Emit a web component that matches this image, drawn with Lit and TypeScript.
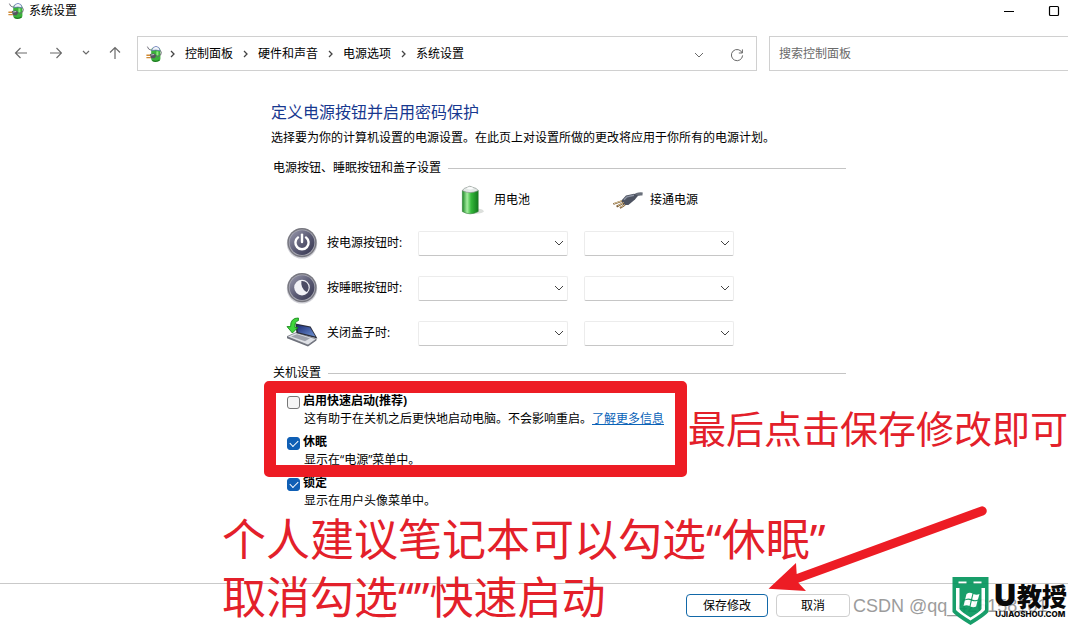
import { LitElement, html, css, svg } from "lit";
import { customElement, state } from "lit/decorators.js";

const plugIcon = (size: number) => html`
  <svg width=${size} height=${size} viewBox="0 0 16 16" aria-hidden="true">
    <rect x="5.2" y="1.6" width="9.2" height="14" rx="3" fill="#3bb23b" />
    <path d="M5.600 4.600Q6.600 .6 10 .3Q13.600 .6 14.200 4.800Q10 3.400 5.600 4.600Z" fill="#f0f4f8" stroke="#5a6db0" stroke-width=".7" />
    <path d="M11.400 5.400v4" stroke="#8fe880" stroke-width="2" />
    <path d="M6.400 14.4Q10 16.4 13.400 14" stroke="#1d7a20" stroke-width="1.2" fill="none" />
    <path d="M1.4 .6Q2 3.600 5.200 4.200M14.200 4.400Q16.400 6 14.600 9L11 11" fill="none" stroke="#6a6672" stroke-width=".9" />
    <path d="M3.800 8L8.200 7.400L10.600 9.400L8.600 12.200L4.800 12.200Z" fill="#55555f" />
    <path d="M5.200 9l3-.5" stroke="#c0c3ce" />
    <path d="M.4 9.200h3.800M.4 11.600h4.400" stroke="#d08a34" stroke-width="1.400" />
  </svg>`;

const chevron = (cls: string) => html`
  <svg class=${cls} width="10" height="6" viewBox="0 0 10 6" aria-hidden="true">
    <path d="M1 1l4 4l4-4" fill="none" stroke="currentColor" />
  </svg>`;

const crumbArrow = html`
  <svg class="crumb-arrow" width="5" height="8" viewBox="0 0 5 8" aria-hidden="true">
    <path d="M1 1l3 3l-3 3" fill="none" stroke="currentColor" stroke-width="1.3" />
  </svg>`;

const roundFace = (id: string, glyph: unknown) => html`
  <svg width="32" height="32" viewBox="0 0 32 32" aria-hidden="true">
    <defs>
      <linearGradient id=${id} x1="0" y1="0" x2="1" y2="1">
        <stop offset="0" stop-color="#9a9aae" />
        <stop offset=".5" stop-color="#5d5d76" />
        <stop offset="1" stop-color="#35354f" />
      </linearGradient>
    </defs>
    <circle cx="16" cy="16.4" r="15.2" fill="#cfcfd6" />
    <circle cx="16" cy="15.600" r="14.6" fill="#77777f" />
    <circle cx="16" cy="15.600" r="13.2" fill="#a9a9b4" />
    <circle cx="16" cy="15.600" r="12.4" fill="url(#${id})" />
    ${glyph}
  </svg>`;

const powerFace = roundFace("power-face", svg`
  <path d="M12 10.4a6.6 6.6 0 1 0 8 0" fill="none" stroke="#fff" stroke-width="2.4" stroke-linecap="round"/>
  <path d="M16 7.600v7.4" stroke="#fff" stroke-width="2.4" stroke-linecap="round"/>`);

const sleepFace = roundFace("sleep-face", svg`
  <circle cx="16" cy="15.600" r="7.8" fill="#f1f1f6"/>
  <path d="M15.4 9Q22 8.600 22.600 15.600Q22.400 19.400 20.400 20Q14.400 16.200 15.400 9Z" fill="#4b4b64"/>`);

const lidFace = html`
  <svg width="32" height="32" viewBox="0 0 32 32" aria-hidden="true">
    <defs>
      <linearGradient id="lid" x1="0" y1="0" x2="1" y2="1">
        <stop offset="0" stop-color="#1c2c75" />
        <stop offset="1" stop-color="#6f93d4" />
      </linearGradient>
    </defs>
    <path d="M1 19.600L10 15.6L30.4 22L22 28Z" fill="#dfe1e6" stroke="#7b7e88" stroke-width=".8" />
    <path d="M1 19.600v1.6L22 29.6L30.4 23.600V22L22 28Z" fill="#6d707a" />
    <path d="M5 19.600l6-2.400l13 4l-5 3Z" fill="#9fa2ac" />
    <path d="M10.4 16L9.4 6.600L24.600 9.4L31.4 21.4Z" fill="#2a2d3b" />
    <path d="M12 15.2L11 8L24 10.4L29.4 19.600Z" fill="url(#lid)" />
    <path d="M12.400 1Q4.400 .8 4.600 9.600H1L6.400 16L12 10.400H8.8Q8.600 4.400 12.400 3.600Z" fill="#3fd63a" stroke="#178a1b" stroke-width=".9" />
  </svg>`;

const batteryIcon = html`
  <svg width="24" height="30" viewBox="0 0 24 30" aria-hidden="true">
    <defs>
      <linearGradient id="cell" x1="0" y1="0" x2="1" y2="0">
        <stop offset="0" stop-color="#1d8a27" />
        <stop offset=".3" stop-color="#a5eda0" />
        <stop offset=".55" stop-color="#35b93b" />
        <stop offset="1" stop-color="#117a1c" />
      </linearGradient>
    </defs>
    <ellipse cx="16" cy="26.2" rx="7.600" ry="2.6" fill="#dcdfdc" />
    <path d="M2.4 5.4V26.600Q10 31 18.2 26.600V5.4Z" fill="url(#cell)" stroke="#2a7a2f" stroke-width=".6" />
    <path d="M2.400 5.600Q4 2.600 7 2.400Q9.600 0 13 2.400Q17 3 18.200 5.600Q10 9.600 2.400 5.600Z" fill="#e4e9e7" stroke="#8e9892" stroke-width=".7" />
    <path d="M6.400 3.200Q10 1 13.800 3.200Q10 5.600 6.400 3.200Z" fill="#fbfcfc" />
  </svg>`;

const cordIcon = html`
  <svg width="32" height="18" viewBox="0 0 32 18" aria-hidden="true">
    <path d="M23 5.600Q26 2.4 31.600 3" fill="none" stroke="#6a707b" stroke-width="3.200" />
    <path d="M10 10L15 4.400L23 2.800L27 4.8L24 8.6L17.400 14L12.400 14Z" fill="#4d5361" />
    <path d="M13 8.8L16 5.800L23 4.200" fill="none" stroke="#8f96a5" stroke-width="1.4" />
    <path d="M11 10L2.4 13M12.600 11.8L5.600 15.600M14 13.8L9 17" stroke="#6b4a22" stroke-width="1.800" />
    <path d="M11 9.8L3 12.6M12.600 11.6L6.600 14.8M14 13.6L9.600 16.4" stroke="#f0dcb0" stroke-width=".9" />
  </svg>`;

interface ShutdownOption {
  id: string;
  title: string;
  note: string;
  link?: string;
  on: boolean;
}

@customElement("app-root")
export class AppRoot extends LitElement {
  @state() private options: ShutdownOption[] = [
    { id: "fast", title: "启用快速启动(推荐)", note: "这有助于在关机之后更快地启动电脑。不会影响重启。", link: "了解更多信息", on: false },
    { id: "hibernate", title: "休眠", note: "显示在“电源”菜单中。", on: true },
    { id: "lock", title: "锁定", note: "显示在用户头像菜单中。", on: true },
  ];

  private crumbs = ["控制面板", "硬件和声音", "电源选项", "系统设置"];

  private actions = [
    { id: "power", label: "按电源按钮时:", icon: powerFace },
    { id: "sleep", label: "按睡眠按钮时:", icon: sleepFace },
    { id: "lid", label: "关闭盖子时:", icon: lidFace },
  ];

  static styles = css`
    :host {
      display: block;
      position: relative;
      overflow: hidden;
      min-height: 100vh;
      background: #fff;
      color: #000;
      font: 12px/18px "Open Sans", "Noto Sans CJK SC", sans-serif;
    }
    * { box-sizing: border-box; }
    svg { display: block; flex: none; }
    button, input, select { font: inherit; color: inherit; margin: 0; }
    .window { display: flex; flex-direction: column; min-height: 100vh; }

    .titlebar { display: flex; align-items: center; height: 21px; padding: 0 8px; gap: 5px; }
    .titlebar h1 { margin: 0; flex: 1; font-size: 12px; font-weight: 400; }
    .controls { display: flex; gap: 33px; }
    .icon-button { display: grid; place-items: center; padding: 0; border: 0; background: none; color: #6a6a6a; }
    .controls .icon-button { color: #000; }

    .nav { display: flex; align-items: stretch; height: 35px; margin-top: 15px; }
    .history { display: flex; align-items: center; gap: 20px; padding: 0 15px 2px 14px; }
    .history .pair { display: flex; align-items: center; gap: 18px; }
    .address { flex: 1; display: flex; align-items: center; border: 1px solid #d0d0d0; padding: 0 12px 0 8px; }
    .crumbs { display: flex; align-items: center; gap: 10px; flex: 1; margin: 0; padding: 0 0 0 8px; list-style: none; }
    .crumbs li { display: flex; align-items: center; gap: 10px; }
    .crumbs a { color: #000; text-decoration: none; }
    .crumb-arrow { color: #444; }
    .address-tools { display: flex; align-items: center; gap: 26px; padding-top: 3px; }
    .search { width: 28%; margin-left: 12px; border: 1px solid #d0d0d0; border-right: 0; display: flex; }
    .search input { flex: 1; min-width: 0; border: 0; outline: 0; padding: 0 9px; background: none; }
    .search input::placeholder { color: #6a6a6a; opacity: 1; }

    .content { flex: 1; width: 100%; max-width: 846px; padding: 29px 0 0 271px; }
    .content h2 { margin: 0; font-size: 16px; line-height: 24px; font-weight: 400; color: #17388f; }
    .intro { margin: 5px 0 0; }
    .section { display: flex; align-items: center; gap: 7px; margin: 0; padding-left: 2px; font-size: 12px; font-weight: 400; white-space: nowrap; }
    .section::after { content: ""; flex: 1; height: 1px; background: #c4c4c4; }
    .power { margin-top: 12px; }

    .grid { display: grid; grid-template-columns: 33px 83px 150px 150px; column-gap: 8px; row-gap: 13px; align-items: center; padding: 7px 0 0 15px; }
    .source { display: flex; align-items: center; height: 32px; white-space: nowrap; margin-bottom: -2px; }
    .battery { grid-column: 3; padding-left: 42px; gap: 10px; }
    .cord { grid-column: 4; padding-left: 35px; gap: 7px; }
    .grid label { white-space: nowrap; }
    .grid .field { display: grid; align-items: center; width: 150px; }
    .grid .second { margin-left: 8px; }
    .grid select { grid-area: 1 / 1; height: 25px; width: 100%; appearance: none; border: 1px solid #ececec; border-bottom-color: #c6c6c6; border-radius: 2px; background: #fff; }
    .field .chev { grid-area: 1 / 1; justify-self: end; margin-right: 4px; pointer-events: none; color: #444; }

    .shutdown { margin-top: 15px; }
    .options { display: flex; flex-direction: column; gap: 5px; padding: 10px 0 0 16px; }
    .option { display: grid; grid-template-columns: 13px 1fr; column-gap: 3px; }
    .option input { appearance: none; width: 13px; height: 13px; margin-top: 4px; border: 1px solid #777; border-radius: 3px; background: #f5f5f5; display: grid; place-items: center; }
    .option input:checked { background: #0f5fb5; border-color: #0f5fb5; }
    .option input:checked::before { content: ""; width: 7px; height: 4px; margin-bottom: 2px; border: solid #fff; border-width: 0 0 1px 1px; transform: rotate(-45deg); }
    .option label { font-weight: 700; }
    .option p { grid-column: 2; margin: 0; padding-left: 1px; }
    .option a { color: #0a63b8; }

    .footer { display: flex; justify-content: flex-end; gap: 8px; height: 43px; padding: 10px 218px 0 0; border-top: 1px solid #c9c9c9; }
    .footer button { height: 23px; width: 74px; padding: 0; border: 1px solid #cfcfcf; border-radius: 4px; background: #fff; line-height: 16px; }
    .footer .primary { width: 82px; border-color: #1268a8; }

    /* marks drawn over the window */
    .frame { position: absolute; left: 264px; top: 381px; width: 423px; height: 96px; border: 12px solid #ed1c24; border-radius: 5px; pointer-events: none; }
    .note { position: absolute; margin: 0; color: #e3202a; font-family: "Noto Sans", "Noto Sans CJK SC", sans-serif; white-space: nowrap; pointer-events: none; }
    .note-side { left: 688px; top: 399px; font-size: 38px; line-height: 58px; }
    .note-main { left: 222px; top: 510px; font-size: 44px; line-height: 58px; }
    .arrow { position: absolute; left: 760px; top: 500px; pointer-events: none; }
    .watermark { position: absolute; left: 853px; top: 595px; font: 18px/22px "Liberation Sans", sans-serif; color: #9c9c9c; white-space: nowrap; pointer-events: none; }
    .brand { position: absolute; right: 1px; top: 577px; display: flex; gap: 5px; color: #0a0a0a; pointer-events: none; }
    .shield { opacity: 0.9; }
    .brand-name { display: grid; grid-template-columns: auto auto; justify-content: start; align-content: start; column-gap: 1px; padding-top: 5px; }
    .brand-u { font: 900 30px/26px Inter, sans-serif; }
    .brand-cn { font: 900 25px/26px "Noto Sans CJK SC", sans-serif; }
    .brand-url { grid-column: 1 / 3; padding-left: 1px; font: 800 8px/12px Inter, sans-serif; }
  `;

  private toggle(id: string, e: Event) {
    const on = (e.target as HTMLInputElement).checked;
    this.options = this.options.map((o) => (o.id === id ? { ...o, on } : o));
  }

  private picker(id: string, label: string, second = false) {
    return html`
      <div class="field ${second ? "second" : ""}">
        <select id=${id} aria-label=${label}></select>
        ${chevron("chev")}
      </div>`;
  }

  private arrowButton(label: string, d: string) {
    return html`
      <button class="icon-button" aria-label=${label}>
        <svg width="14" height="14" viewBox="0 0 14 14"><path d=${d} fill="none" stroke="currentColor" stroke-width="1.2" /></svg>
      </button>`;
  }

  render() {
    return html`
      <div class="window">
        <header class="titlebar">
          ${plugIcon(16)}
          <h1>系统设置</h1>
          <div class="controls">
            <button class="icon-button" aria-label="最小化">
              <svg width="12" height="12" viewBox="0 0 12 12"><path d="M1 6.5h10" stroke="currentColor" /></svg>
            </button>
            <button class="icon-button" aria-label="最大化">
              <svg width="12" height="12" viewBox="0 0 12 12"><rect x="1.5" y="1.5" width="9" height="9" rx="1" fill="none" stroke="currentColor" stroke-width="1.2" /></svg>
            </button>
          </div>
        </header>

        <nav class="nav">
          <div class="history">
            ${this.arrowButton("后退", "M13 7H1.5M6.5 2L1.5 7L6.5 12")}
            ${this.arrowButton("前进", "M2 7h11.5M8.5 2L13.5 7L8.5 12")}
            <div class="pair">
              <button class="icon-button" aria-label="最近位置">
                <svg width="8" height="6" viewBox="0 0 8 6"><path d="M1 1l3 3l3-3" fill="none" stroke="currentColor" stroke-width="1.2" /></svg>
              </button>
              ${this.arrowButton("向上", "M7 13V1.5M2 6.5L7 1.5L12 6.5")}
            </div>
          </div>
          <div class="address">
            ${plugIcon(16)}
            <ol class="crumbs">
              ${this.crumbs.map((c) => html`<li>${crumbArrow}<a href="#">${c}</a></li>`)}
            </ol>
            <div class="address-tools">
              <button class="icon-button" aria-label="历史记录">${chevron("")}</button>
              <button class="icon-button" aria-label="刷新">
                <svg width="14" height="14" viewBox="0 0 14 14">
                  <path d="M12.2 5A5.6 5.6 0 1 0 12.6 7.4M12.4 1.4V5H8.8" fill="none" stroke="currentColor" />
                </svg>
              </button>
            </div>
          </div>
          <div class="search"><input type="search" aria-label="搜索控制面板" placeholder="搜索控制面板" /></div>
        </nav>

        <main class="content">
          <h2>定义电源按钮并启用密码保护</h2>
          <p class="intro">选择要为你的计算机设置的电源设置。在此页上对设置所做的更改将应用于你所有的电源计划。</p>

          <section class="power">
            <h3 class="section">电源按钮、睡眠按钮和盖子设置</h3>
            <div class="grid">
              <div class="source battery">${batteryIcon}<span>用电池</span></div>
              <div class="source cord">${cordIcon}<span>接通电源</span></div>
              ${this.actions.map((a) => html`
                ${a.icon}
                <label for="${a.id}-battery">${a.label}</label>
                ${this.picker(`${a.id}-battery`, `${a.label} 用电池`)}
                ${this.picker(`${a.id}-cord`, `${a.label} 接通电源`, true)}
              `)}
            </div>
          </section>

          <section class="shutdown">
            <h3 class="section">关机设置</h3>
            <div class="options">
              ${this.options.map((o) => html`
                <div class="option">
                  <input type="checkbox" id=${o.id} .checked=${o.on} @change=${(e: Event) => this.toggle(o.id, e)} />
                  <label for=${o.id}>${o.title}</label>
                  <p>${o.note}${o.link ? html`<a href="#">${o.link}</a>` : ""}</p>
                </div>`)}
            </div>
          </section>
        </main>

        <footer class="footer">
          <button class="primary">保存修改</button>
          <button>取消</button>
        </footer>
      </div>

      <div class="frame"></div>
      <p class="note note-side">最后点击保存修改即可</p>
      <p class="note note-main">个人建议笔记本可以勾选“休眠”<br />取消勾选“”快速启动</p>
      <svg class="arrow" width="232" height="96" viewBox="0 0 232 96" aria-hidden="true">
        <path d="M8.500 88.700L36 63L36.700 74L220.400 6.700A4.600 4.600 0 0 1 223.800 15.300L38.300 82.700L46 91Z" fill="#ed1c24" />
      </svg>

      <div class="watermark">CSDN @qq_426158101</div>
      <div class="brand">
        <svg class="shield" width="37" height="48" viewBox="0 0 36 48" aria-hidden="true">
          <path fill-rule="evenodd" d="M0 0H36V35Q33 39 18 48Q3 39 0 35ZM6 4.500V6.500H14V4.500ZM21 4.500V6.500H29V4.500Z" fill="#00945a" />
          <path d="M3.500 11H7V32Q9 35 18 40.500Q27 35 29 32V11H32.500V33Q30 36 18 43.500Q6 36 3.500 33Z" fill="#fff" />
          <path d="M14 17Q17 15 20 16.500L18.600 22Q15.600 21 12.600 22.500ZM21 17Q24 18.500 27 17L25.400 22.500Q22.400 24 19.600 22.500ZM12.300 23.600Q15.300 22 18.300 23.300L17 29Q14 27.600 11 29ZM19.300 23.700Q22.300 25 25 23.700L23.600 29.500Q20.600 31 18 29.500Z" fill="#fff" />
        </svg>
        <div class="brand-name">
          <span class="brand-u">U</span><span class="brand-cn">教授</span>
          <span class="brand-url">UJIAOSHOU.COM</span>
        </div>
      </div>
    `;
  }
}
